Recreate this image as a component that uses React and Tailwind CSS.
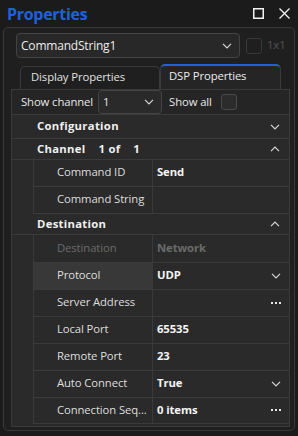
import React from "react";

const Chevron = ({ up = false, className = "" }) => (
  <svg width="10" height="6" viewBox="0 0 10 6" className={className}>
    <path
      d={up ? "M1 5.2L5 1.2L9 5.2" : "M1 0.8L5 4.8L9 0.8"}
      stroke="currentColor"
      strokeWidth="1.2"
      fill="none"
    />
  </svg>
);

const Dots = () => (
  <div className="flex gap-[2px] items-center">
    <div className="w-[2px] h-[2px] bg-[#e8e8e8]" />
    <div className="w-[2px] h-[2px] bg-[#e8e8e8]" />
    <div className="w-[2px] h-[2px] bg-[#e8e8e8]" />
  </div>
);

const Header = ({ label, up, h }) => (
  <div className={`flex items-center border-b border-[#3a3a3a] pl-[25px] pr-[9px] ${h}`}>
    <span className="font-bold text-[#f0f0f0] whitespace-pre tracking-[0.3px]">{label}</span>
    <Chevron up={up} className="ml-auto text-[#d8d8d8]" />
  </div>
);

const Row = ({ label, value, disabled, highlight, chevron, dots, h = "h-[27px]" }) => (
  <div className={`flex ${h}`}>
    <div className="w-[21px] shrink-0" />
    <div className="flex flex-1 border-b border-l border-[#3a3a3a]">
      <div
        className={`w-[118px] shrink-0 flex items-center pl-[23px] pb-[1px] whitespace-nowrap overflow-hidden ${
          highlight ? "bg-[#383838]" : ""
        } ${disabled ? "text-[#6b6b6b]" : "text-[#dedede]"}`}
      >
        {label}
      </div>
      <div className="flex-1 flex items-center border-l border-[#3a3a3a] pl-[4px] pr-[8px] pb-[1px]">
        <span className={`font-bold ${disabled ? "text-[#6b6b6b]" : "text-[#f4f4f4]"}`}>{value}</span>
        {chevron && <Chevron className="ml-auto text-[#d8d8d8]" />}
        {dots && (
          <div className="ml-auto">
            <Dots />
          </div>
        )}
      </div>
    </div>
  </div>
);

export default function App() {
  return (
    <div className="w-[298px] h-[436px] bg-[#1b1b1b] flex flex-col text-[11.3px] tracking-[-0.1px] text-[#e6e6e6] font-['Open_Sans','Noto_Sans',sans-serif] overflow-hidden">
      <div className="h-[27px] shrink-0 flex items-center pl-[7px] pr-[8px]">
        <span className="text-[#1e62d8] text-[16px] font-bold leading-none tracking-[-0.3px]">Properties</span>
        <div className="ml-auto flex items-center gap-[15px]">
          <svg width="11" height="11" viewBox="0 0 11 11">
            <rect x="0.75" y="0.75" width="9.5" height="9.5" stroke="#f2f2f2" strokeWidth="1.5" fill="none" />
          </svg>
          <svg width="11" height="11" viewBox="0 0 11 11">
            <path d="M0.5 0.5L10.5 10.5M10.5 0.5L0.5 10.5" stroke="#f2f2f2" strokeWidth="1.3" />
          </svg>
        </div>
      </div>
      <div className="flex-1 mx-[3px] mb-[5px] border border-[#393939] rounded-[5px] bg-[#1f1f1f] flex flex-col min-h-0">
        <div className="flex items-center mt-[5px] ml-[12px] shrink-0">
          <div className="w-[224px] h-[25px] rounded-[4px] border border-[#444444] bg-[#282828] flex items-center pl-[4px] pr-[7px]">
            <span className="text-[#ececec] text-[12px] tracking-[-0.2px]">CommandString1</span>
            <Chevron className="ml-auto text-[#d8d8d8]" />
          </div>
          <div className="ml-[6px] w-[16px] h-[16px] rounded-[3px] border border-[#383838]" />
          <span className="ml-[5px] text-[#555555]">1x1</span>
        </div>
        <div className="flex items-end mt-[6px] ml-[16px] h-[25px] shrink-0">
          <div className="w-[140px] h-[23px] border border-b-0 border-[#3a3a3a] rounded-t-[5px] pl-[10px] pb-[2px] flex items-center text-[#e0e0e0]">
            Display Properties
          </div>
          <div className="w-[121px] h-[25px] border-t-2 border-t-[#1e62d8] border-x border-x-[#3a3a3a] rounded-t-[5px] bg-[#252525] pl-[8px] pb-[2px] flex items-center text-[#ececec]">
            DSP Properties
          </div>
        </div>
        <div className="flex-1 ml-[7px] mr-[4px] mb-[3px] border border-[#3a3a3a] bg-[#252525] flex flex-col min-h-0">
          <div className="h-[24px] shrink-0 flex items-center pl-[9px]">
            <span className="text-[#e8e8e8]">Show channel</span>
            <div className="ml-[5px] w-[64px] h-[24px] rounded-[4px] border border-[#444444] bg-[#2a2a2a] flex items-center pl-[4px] pr-[7px]">
              <span>1</span>
              <Chevron className="ml-auto text-[#d8d8d8]" />
            </div>
            <span className="ml-[7px] text-[#e8e8e8]">Show all</span>
            <div className="ml-[9px] w-[16px] h-[16px] rounded-[3px] border border-[#4a4a4a] bg-[#2c2c2c]" />
          </div>
          <div className="flex-1 bg-[#2a2a2a] border-t border-[#3a3a3a] flex flex-col">
            <Header label="Configuration" h="h-[24px]" />
            <Header label={"Channel    1 of    1"} up h="h-[21px]" />
            <Row label="Command ID" value="Send" />
            <Row label="Command String" value="" />
            <Header label="Destination" up h="h-[21px]" />
            <Row label="Destination" value="Network" disabled h="h-[28px]" />
            <Row label="Protocol" value="UDP" highlight chevron />
            <Row label="Server Address" value="" dots />
            <Row label="Local Port" value="65535" />
            <Row label="Remote Port" value="23" />
            <Row label="Auto Connect" value="True" chevron />
            <Row label="Connection Seq..." value="0 items" dots h="h-[26px]" />
          </div>
        </div>
      </div>
    </div>
  );
}
